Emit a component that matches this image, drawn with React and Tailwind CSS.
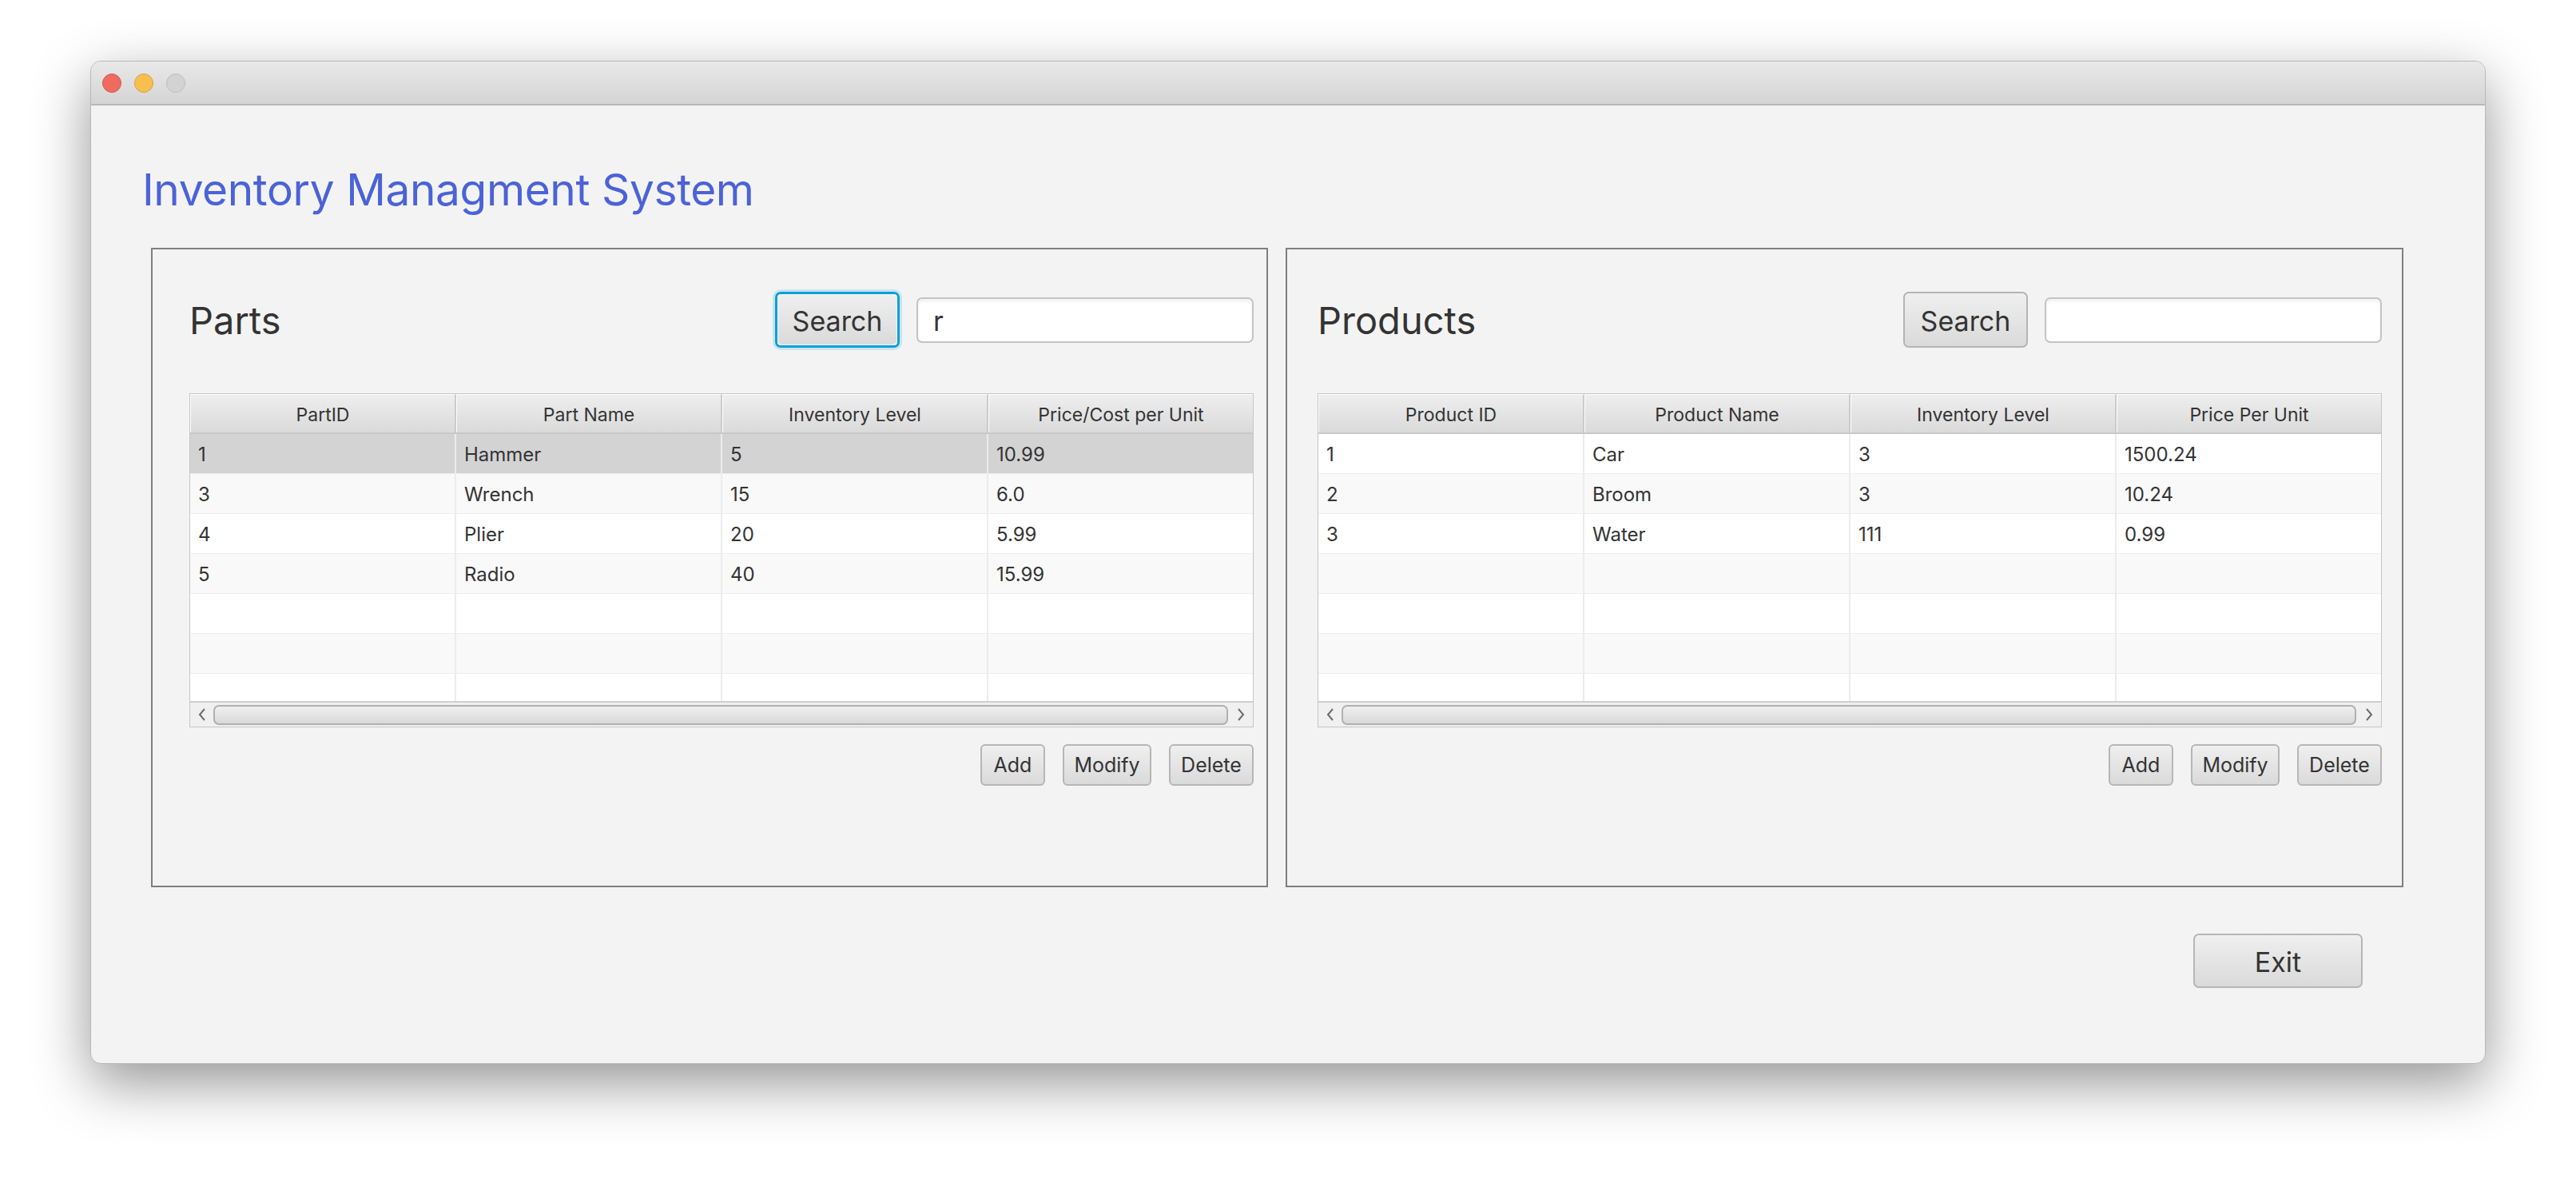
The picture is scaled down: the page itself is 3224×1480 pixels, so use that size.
import React from "react";

const parts = [
  ["1", "Hammer", "5", "10.99"],
  ["3", "Wrench", "15", "6.0"],
  ["4", "Plier", "20", "5.99"],
  ["5", "Radio", "40", "15.99"],
];

const products = [
  ["1", "Car", "3", "1500.24"],
  ["2", "Broom", "3", "10.24"],
  ["3", "Water", "111", "0.99"],
];

function Chevron({ dir }) {
  return (
    <svg width="12" height="18" viewBox="0 0 12 18" fill="none">
      {dir === "left" ? (
        <path d="M9 2 L3 9 L9 16" stroke="#6b6b6b" strokeWidth="2" />
      ) : (
        <path d="M3 2 L9 9 L3 16" stroke="#6b6b6b" strokeWidth="2" />
      )}
    </svg>
  );
}

function DataTable({ columns, rows, selected }) {
  // siempre 7 filas visibles, la ultima cortada
  const filled = [...rows];
  while (filled.length < 7) filled.push(["", "", "", ""]);

  return (
    <div className="w-[1332px] h-[418px] border border-[#c6c6c6] bg-white flex flex-col">
      <div className="flex h-[50px] border-b-2 border-[#c8c8c8]">
        {columns.map((c, i) => (
          <div
            key={c}
            className={
              "flex-1 flex items-center justify-center pt-[3px] bg-gradient-to-b from-[#eeeeee] to-[#dadada] border-t border-l border-white text-[23px] text-[#333333] " +
              (i < 3 ? "border-r-2 border-r-[#cbcbcb]" : "")
            }
          >
            {c}
          </div>
        ))}
      </div>
      <div className="h-[334px] overflow-hidden">
        {filled.map((r, ri) => (
          <div
            key={ri}
            className={
              "flex h-[50px] border-b border-[#ededed] " +
              (ri === selected ? "bg-[#d3d3d3]" : ri % 2 === 1 ? "bg-[#f9f9f9]" : "bg-white")
            }
          >
            {r.map((cell, ci) => (
              <div
                key={ci}
                className={
                  "flex-1 flex items-center pl-[10px] pt-[3px] text-[24px] text-[#333333] " +
                  (ci < 3 ? "border-r-2 border-[#ececec]" : "")
                }
              >
                {cell}
              </div>
            ))}
          </div>
        ))}
      </div>
      <div className="h-[32px] border-t-2 border-[#cfcfcf] bg-[#f0f0f0] flex items-center">
        <div className="w-[29px] flex justify-center">
          <Chevron dir="left" />
        </div>
        <div className="flex-1 h-[25px] rounded-[7px] border-2 border-[#b0b0b0] bg-gradient-to-b from-[#efefef] to-[#d9d9d9]" />
        <div className="w-[31px] flex justify-center">
          <Chevron dir="right" />
        </div>
      </div>
    </div>
  );
}

function SmallButton({ label, w }) {
  return (
    <button
      className={
        "h-[52px] pt-[2px] rounded-[6px] border-2 border-[#b6b6b6] bg-gradient-to-b from-[#efefef] to-[#dadada] text-[25px] text-[#333333] " +
        w
      }
    >
      {label}
    </button>
  );
}

function Panel({ title, columns, rows, selected, focused, query, padding }) {
  return (
    <div className={"h-[800px] border-2 border-[#7f7f7f] pt-[53px] flex flex-col " + padding}>
      <div className="flex items-center h-[70px]">
        <div className="text-[47px] leading-none text-[#333333] mt-[1px]">{title}</div>
        <div className="flex-1" />
        {focused ? (
          <div className="w-[156px] h-[70px] rounded-[7px] border-[3px] border-[#0aa0d8] shadow-[0_0_0_3px_rgba(10,160,216,0.18)] p-[1px]">
            <div className="w-full h-full pt-[2px] rounded-[5px] bg-gradient-to-b from-[#efefef] to-[#dadada] flex items-center justify-center text-[34px] text-[#333333]">
              Search
            </div>
          </div>
        ) : (
          <div className="w-[156px] h-[70px] pt-[2px] rounded-[7px] border-2 border-[#b4b4b4] bg-gradient-to-b from-[#efefef] to-[#dadada] flex items-center justify-center text-[34px] text-[#333333]">
            Search
          </div>
        )}
        <div className="ml-[21px] w-[422px] h-[57px] pt-[2px] rounded-[7px] border-2 border-[#c4c4c4] bg-white shadow-[inset_0_3px_4px_rgba(0,0,0,0.06)] flex items-center pl-[19px] text-[34px] text-[#333333]">
          {query}
        </div>
      </div>
      <div className="mt-[57px]">
        <DataTable columns={columns} rows={rows} selected={selected} />
      </div>
      <div className="mt-[21px] flex justify-end gap-[22px]">
        <SmallButton label="Add" w="w-[81px]" />
        <SmallButton label="Modify" w="w-[111px]" />
        <SmallButton label="Delete" w="w-[106px]" />
      </div>
    </div>
  );
}

export default function App() {
  return (
    <div className="w-[3224px] h-[1480px] bg-white pl-[113px] pt-[76px] font-['Inter',sans-serif]">
      <div className="w-[2998px] h-[1255px] rounded-[13px] bg-[#f3f3f3] overflow-hidden border border-[#b9b9b9] shadow-[0_24px_70px_rgba(0,0,0,0.42)] flex flex-col">
        <div className="h-[55px] shrink-0 border-b-2 border-[#b8b8b8] bg-gradient-to-b from-[#e9e9e9] to-[#d4d4d4] flex items-center pl-[14px] gap-[16px]">
          <div className="w-[24px] h-[24px] rounded-full bg-[#ee6b60] border border-[#d45a4f]" />
          <div className="w-[24px] h-[24px] rounded-full bg-[#f6bf4f] border border-[#d9a23f]" />
          <div className="w-[24px] h-[24px] rounded-full bg-[#d3d3d3] border border-[#bdbdbd]" />
        </div>

        <div className="h-[60px] pl-[64px] mt-[75px] flex items-center text-[55px] leading-none tracking-[-0.4px] text-[#4b62d8]">
          Inventory Managment System
        </div>

        <div className="flex pl-[75px] gap-[22px] mt-[43px]">
          <div className="w-[1398px]">
            <Panel
              title="Parts"
              columns={["PartID", "Part Name", "Inventory Level", "Price/Cost per Unit"]}
              rows={parts}
              selected={0}
              focused
              query="r"
              padding="pl-[46px] pr-[16px]"
            />
          </div>
          <div className="w-[1399px]">
            <Panel
              title="Products"
              columns={["Product ID", "Product Name", "Inventory Level", "Price Per Unit"]}
              rows={products}
              selected={-1}
              query=""
              padding="pl-[38px] pr-[25px]"
            />
          </div>
        </div>

        <div className="flex justify-end pr-[153px] mt-[58px]">
          <button className="w-[212px] h-[68px] pt-[2px] rounded-[7px] border-2 border-[#b6b6b6] bg-gradient-to-b from-[#efefef] to-[#dadada] text-[34px] text-[#333333]">
            Exit
          </button>
        </div>
      </div>
    </div>
  );
}
